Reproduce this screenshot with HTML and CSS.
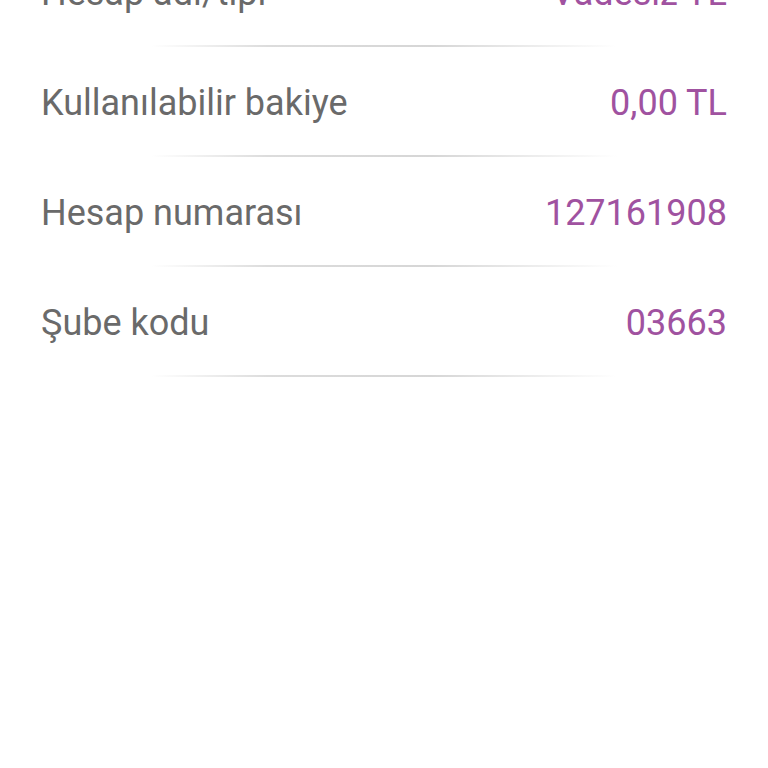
FILE: index.html
```html
<!DOCTYPE html>
<html lang="tr">
<head>
  <meta charset="UTF-8">
  <meta name="viewport" content="width=device-width, initial-scale=1.0">
  <title>Hesap Detayı</title>
  <link rel="stylesheet" href="styles.css">
</head>
<body>

  <div id="accountInfo">
    <div class="row">
      <span class="label">Hesap adı/tipi</span>
      <span class="value">Vadesiz TL</span>
    </div>
    <div class="divider"></div>

    <div class="row">
      <span class="label">Kullanılabilir bakiye</span>
      <span class="value">0,00 TL</span>
    </div>
    <div class="divider"></div>

    <div class="row">
      <span class="label">Hesap numarası</span>
      <span class="value">127161908</span>
    </div>
    <div class="divider"></div>

    <div class="row">
      <span class="label">Şube kodu</span>
      <span class="value">03663</span>
    </div>
    <div class="divider"></div>
  </div>

</body>
</html>
```

FILE: styles.css
```css
body {
  font-family: 'Roboto', 'Noto Sans', sans-serif;
  margin: 0;
  background-color: #ffffff;
  height: 100vh;
  overflow: hidden;
}

#accountInfo {
  margin-top: -63px;
  padding: 0 41px;
}

.row {
  display: flex;
  justify-content: space-between;
  align-items: center;
  box-sizing: border-box;
  height: 108px;
  padding-top: 3px;
  font-size: 36px;
}

.label {
  color: #6a6a6a;
}

.value {
  color: #a052a0;
}

.divider {
  width: 466px;
  height: 2px;
  margin: 0 auto;
  background: linear-gradient(to right, rgba(220, 220, 220, 0), #dcdcdc 25%, #d6d6d6 60%, rgba(220, 220, 220, 0));
}
```
